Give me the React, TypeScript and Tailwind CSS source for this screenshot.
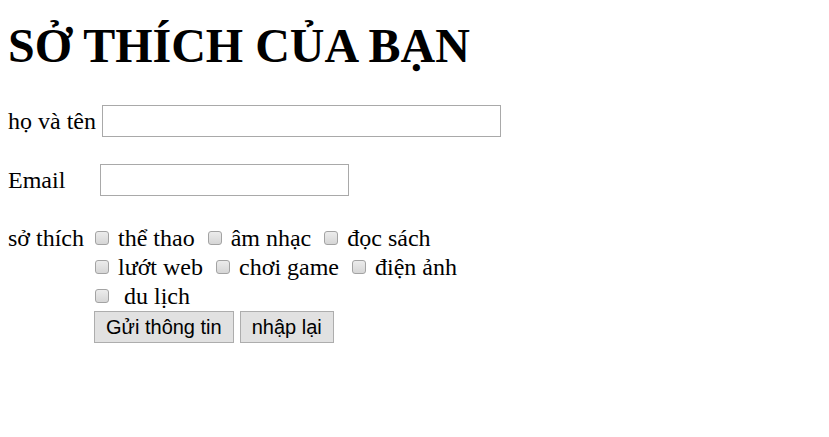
export default function App() {
    const box = "inline-block w-[14px] h-[14px] shrink-0 rounded-[3px] border border-[#a3a3a3] bg-gradient-to-b from-[#ececec] to-[#d6d6d6]";
    const line1 = ["thể thao", "âm nhạc", "đọc sách"];
    const line2 = ["lướt web", "chơi game", "điện ảnh"];
    return (
        <div className="min-h-[437px] bg-white px-2 text-[24px] text-black" style={{ fontFamily: '"Liberation Serif", "Times New Roman", serif' }}>
            <h1 className="pt-[18px] text-[48px] font-bold leading-[55px]">
                SỞ THÍCH CỦA BẠN
            </h1>

            <form className="mt-[32px]">
                <div className="flex items-center">
                    <label className="leading-[28px]">họ và tên</label>
                    <input type="text" className="ml-[6px] h-[32px] w-[399px] border border-[#a9a9a9] bg-white px-1 outline-none" />
                </div>

                <div className="mt-[27px] flex items-center">
                    <label className="w-[92px] leading-[28px]">Email</label>
                    <input type="email" className="h-[32px] w-[249px] border border-[#a9a9a9] bg-white px-1 outline-none" />
                </div>

                <div className="mt-[27px] flex">
                    <label className="w-[86px] pt-[1px] leading-[28px]">sở thích</label>
                    <div className="flex flex-col">
                        <div className="flex h-[29px] items-center">
                            {line1.map((item) => (
                                <span key={item} className="mr-[12px] flex items-center">
                                    <span className={box + " ml-px"}></span>
                                    <span className="ml-[9px] leading-[28px]">{item}</span>
                                </span>
                            ))}
                        </div>
                        <div className="flex h-[29px] items-center">
                            {line2.map((item) => (
                                <span key={item} className="mr-[12px] flex items-center">
                                    <span className={box + " ml-px"}></span>
                                    <span className="ml-[9px] leading-[28px]">{item}</span>
                                </span>
                            ))}
                        </div>
                        <div className="flex h-[29px] items-center">
                            <span className={box + " ml-px"}></span>
                            <span className="ml-[15px] leading-[28px]">du lịch</span>
                        </div>
                        <div className="mt-[1px] flex gap-[6px]" style={{ fontFamily: '"Liberation Sans", Arial, sans-serif' }}>
                            <button type="button" className="h-[32px] border border-[#adadad] bg-[#e1e1e1] px-[11px] text-[20px] leading-none">
                                Gửi thông tin
                            </button>
                            <button type="reset" className="h-[32px] border border-[#adadad] bg-[#e1e1e1] px-[11px] text-[20px] leading-none">
                                nhập lại
                            </button>
                        </div>
                    </div>
                </div>
            </form>
        </div>
    );
}
